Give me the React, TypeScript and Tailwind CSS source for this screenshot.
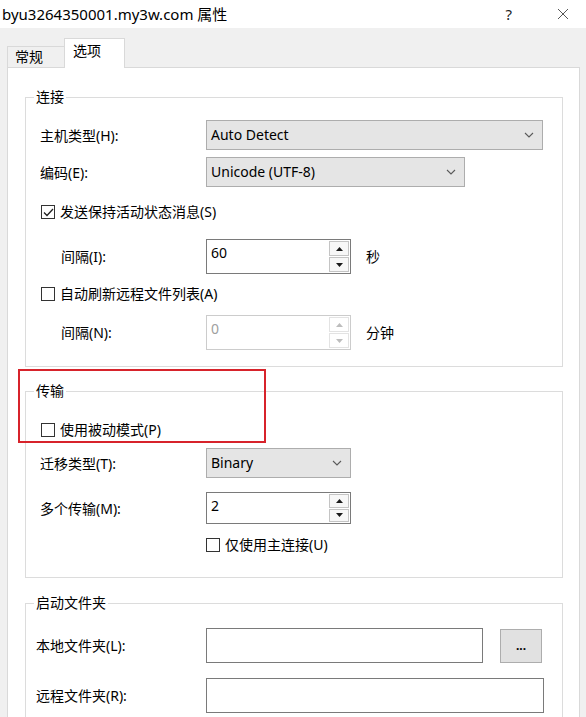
import React from "react";

function Chevron() {
  return (
    <svg width="10" height="6" viewBox="0 0 10 6" className="shrink-0">
      <path d="M1 1l4 4 4-4" fill="none" stroke="#5a5a5a" strokeWidth="1.1" />
    </svg>
  );
}

function Select({ value, width }: { value: string; width: string }) {
  return (
    <div className={`flex h-[30px] ${width} items-center justify-between border border-[#adadad] bg-[#e5e5e5] pl-[4px] pr-[8px]`}>
      <span className="leading-[20px]">{value}</span>
      <Chevron />
    </div>
  );
}

function SpinButton({ up, disabled }: { up?: boolean; disabled?: boolean }) {
  return (
    <div
      className={`flex flex-1 items-center justify-center border ${
        disabled ? "border-[#e3e3e3] bg-white" : "border-[#c4c4c4] bg-[#f7f7f7]"
      }`}
    >
      <svg width="7" height="4" viewBox="0 0 7 4">
        <path d={up ? "M0 4L3.5 0 7 4z" : "M0 0L3.5 4 7 0z"} fill={disabled ? "#bdbdbd" : "#1a1a1a"} />
      </svg>
    </div>
  );
}

function Spin({ value, disabled, height }: { value: string; disabled?: boolean; height: string }) {
  return (
    <div className={`flex w-[145px] ${height} border bg-white ${disabled ? "border-[#cccccc]" : "border-[#7a7a7a]"}`}>
      <div className={`flex-1 pl-[4px] pt-[3px] leading-[20px] ${disabled ? "text-[#a0a0a0]" : "text-black"}`}>{value}</div>
      <div className="flex w-[21px] flex-col gap-[1px] py-[1px] pr-[1px]">
        <SpinButton up disabled={disabled} />
        <SpinButton disabled={disabled} />
      </div>
    </div>
  );
}

function CheckBox({ checked, label, className = "" }: { checked?: boolean; label: string; className?: string }) {
  return (
    <div className={`flex h-[20px] items-center ${className}`}>
      <div className="flex h-[14px] w-[14px] items-center justify-center border border-[#333333] bg-white">
        {checked && (
          <svg width="11" height="9" viewBox="0 0 11 9">
            <path d="M1 4.5l3 3L10 1" fill="none" stroke="#222" strokeWidth="1.3" />
          </svg>
        )}
      </div>
      <span className="ml-[5px] leading-[20px]">{label}</span>
    </div>
  );
}

function Group({ title, className = "", children }: { title: string; className?: string; children: React.ReactNode }) {
  return (
    <fieldset className={`ml-[17px] w-[538px] border border-[#dcdcdc] ${className}`}>
      <legend className="ml-[8px] px-[2px] leading-[20px]">{title}</legend>
      {children}
    </fieldset>
  );
}

export default function App() {
  return (
    <div className="relative h-[717px] w-[586px] overflow-hidden bg-[#f0f0f0] text-[14px] text-black font-[family-name:'Noto_Sans','Noto_Sans_CJK_SC',sans-serif]">
      {/* title bar */}
      <div className="flex h-[28px] items-center justify-between bg-white pl-[2px] pr-[17px]">
        <span className="text-[15px] leading-[20px]">byu3264350001.my3w.com 属性</span>
        <div className="flex items-center">
          <span className="text-[15px] leading-[20px] text-[#222]">?</span>
          <svg width="12" height="12" viewBox="0 0 12 12" className="ml-[45px]">
            <path d="M1 1l10 10M11 1L1 11" stroke="#444" strokeWidth="0.9" />
          </svg>
        </div>
      </div>

      {/* tabs */}
      <div className="relative z-10 -mb-px flex h-[40px] items-end pl-[7px]">
        <div className="mb-px flex h-[21px] w-[57px] items-center border-l border-t border-[#d9d9d9] pl-[7px] leading-[20px]">
          常规
        </div>
        <div className="h-[30px] w-[61px] border-l border-r border-t border-[#d9d9d9] bg-white pl-[8px] pt-[2px] leading-[20px]">
          选项
        </div>
      </div>

      {/* panel */}
      <div className="ml-[7px] h-[700px] w-[573px] border border-[#d9d9d9] bg-white">
        <Group title="连接" className="mt-[19px] pb-[16px]">
          <div className="mt-[13px] flex items-center pl-[14px]">
            <span className="w-[166px]">主机类型(H):</span>
            <Select value="Auto Detect" width="w-[337px]" />
          </div>
          <div className="mt-[7px] flex items-center pl-[14px]">
            <span className="w-[166px]">编码(E):</span>
            <Select value="Unicode (UTF-8)" width="w-[259px]" />
          </div>
          <CheckBox checked label="发送保持活动状态消息(S)" className="mt-[15px] pl-[15px]" />
          <div className="mt-[17px] flex items-center pl-[35px]">
            <span className="w-[145px]">间隔(I):</span>
            <Spin value="60" height="h-[35px]" />
            <span className="ml-[15px]">秒</span>
          </div>
          <CheckBox label="自动刷新远程文件列表(A)" className="mt-[10px] pl-[15px]" />
          <div className="mt-[11px] flex items-center pl-[35px]">
            <span className="w-[145px]">间隔(N):</span>
            <Spin value="0" disabled height="h-[35px]" />
            <span className="ml-[15px]">分钟</span>
          </div>
        </Group>

        <Group title="传输" className="mt-[14px] pb-[22px]">
          <CheckBox label="使用被动模式(P)" className="mt-[19px] pl-[15px]" />
          <div className="mt-[8px] flex items-center pl-[14px]">
            <span className="w-[166px]">迁移类型(T):</span>
            <Select value="Binary" width="w-[145px]" />
          </div>
          <div className="mt-[14px] flex items-center pl-[14px]">
            <span className="w-[166px]">多个传输(M):</span>
            <Spin value="2" height="h-[32px]" />
          </div>
          <CheckBox label="仅使用主连接(U)" className="mt-[11px] pl-[180px]" />
        </Group>

        <Group title="启动文件夹" className="mt-[15px] pb-[20px]">
          <div className="mt-[15px] flex items-center pl-[10px]">
            <span className="w-[170px]">本地文件夹(L):</span>
            <div className="h-[35px] w-[277px] border border-[#7a7a7a] bg-white" />
            <div className="ml-[17px] flex h-[34px] w-[42px] items-center justify-center border border-[#adadad] bg-[#e1e1e1] text-[12px] font-bold leading-none">
              ...
            </div>
          </div>
          <div className="mt-[15px] flex items-center pl-[10px]">
            <span className="w-[170px]">远程文件夹(R):</span>
            <div className="h-[35px] w-[338px] border border-[#7a7a7a] bg-white" />
          </div>
        </Group>
      </div>

      {/* annotation */}
      <div className="absolute left-[18px] top-[369px] h-[74px] w-[248px] border-2 border-[#d7232b]" />
    </div>
  );
}
